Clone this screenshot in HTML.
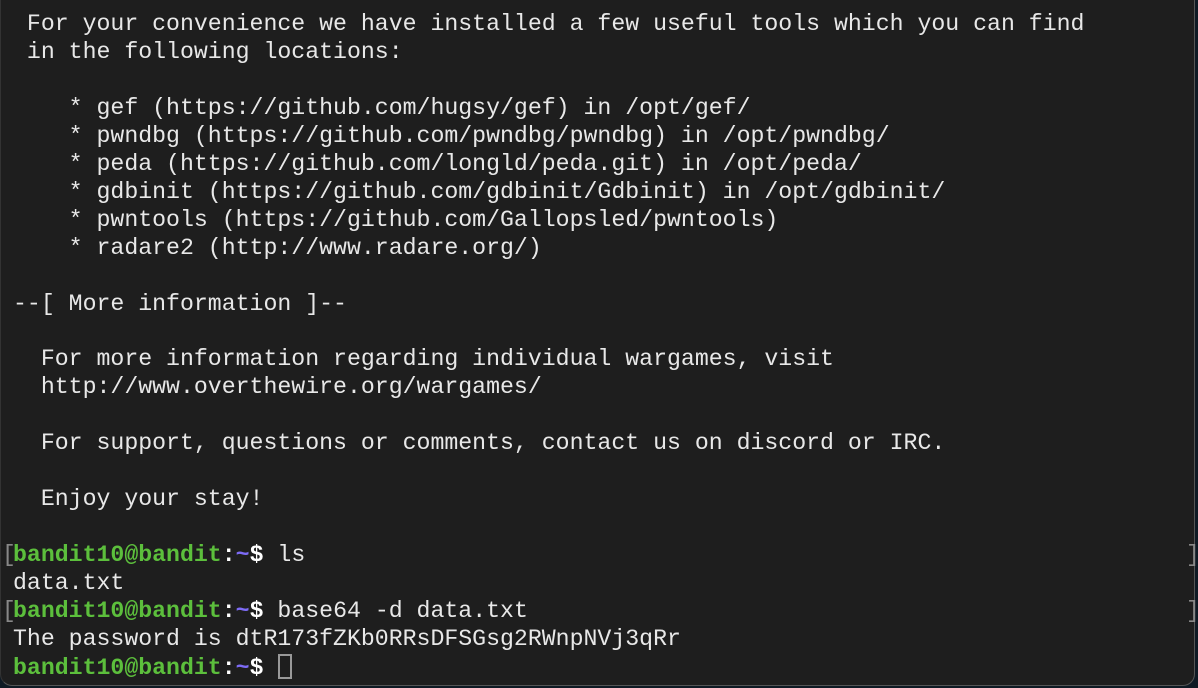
<!DOCTYPE html>
<html><head><meta charset="utf-8"><style>
html,body{margin:0;padding:0;width:1198px;height:688px;overflow:hidden;background:#0f1a24;}
.win{position:absolute;left:0;top:0;width:1195px;height:686px;background:#1e1e1e;border-right:1px solid #555;border-bottom:1px solid #555;border-left:1px solid #333;border-radius:0 0 12px 12px;box-sizing:border-box;}
pre{position:absolute;left:12px;top:11px;margin:0;font-family:"Liberation Mono","DejaVu Sans Mono",monospace;font-size:23.2px;line-height:27.95px;color:#e8e8e8;}
.g{color:#5cbf3c;font-weight:bold}.p{color:#7d6bf5;font-weight:bold}.w{font-weight:bold;color:#fff}
.br{position:absolute;font-family:"Liberation Mono",monospace;font-size:23px;color:#888;}
.cur{display:inline-block;width:14px;height:25px;border:2px solid #999;vertical-align:-5px;margin-left:1px;box-sizing:border-box}
</style></head><body><div class="win">
<pre> For your convenience we have installed a few useful tools which you can find
 in the following locations:

    * gef (https://github.com/hugsy/gef) in /opt/gef/
    * pwndbg (https://github.com/pwndbg/pwndbg) in /opt/pwndbg/
    * peda (https://github.com/longld/peda.git) in /opt/peda/
    * gdbinit (https://github.com/gdbinit/Gdbinit) in /opt/gdbinit/
    * pwntools (https://github.com/Gallopsled/pwntools)
    * radare2 (http://www.radare.org/)

--[ More information ]--

  For more information regarding individual wargames, visit
  http://www.overthewire.org/wargames/

  For support, questions or comments, contact us on discord or IRC.

  Enjoy your stay!

<span class="g">bandit10@bandit</span><span class="w">:</span><span class="p">~</span><span class="w">$</span> ls
data.txt
<span class="g">bandit10@bandit</span><span class="w">:</span><span class="p">~</span><span class="w">$</span> base64 -d data.txt
The password is dtR173fZKb0RRsDFSGsg2RWnpNVj3qRr
<span class="g">bandit10@bandit</span><span class="w">:</span><span class="p">~</span><span class="w">$</span> <span class="cur"></span></pre>
<div class="br" style="left:1px;top:542px">[</div>
<div class="br" style="left:1px;top:598px">[</div>
<div class="br" style="left:1185px;top:542px">]</div>
<div class="br" style="left:1185px;top:598px">]</div>
</div></body></html>
